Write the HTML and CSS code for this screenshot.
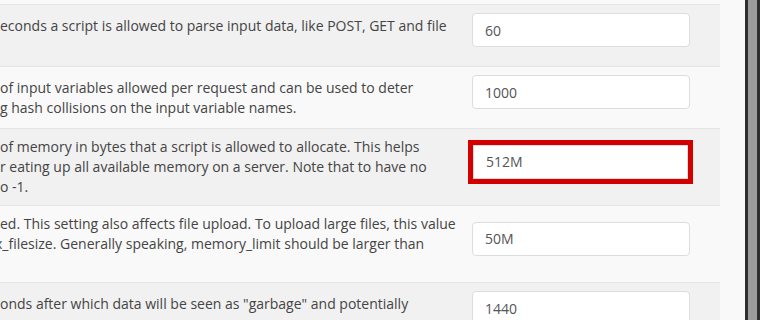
FILE: index.html
```html
<!DOCTYPE html>
<html>

<head lang="en">
    <meta charset="UTF-8">
    <title>PHP Settings</title>
    <link rel="stylesheet" href="styles.css">
</head>

<body>
    <div class="page">
        <div class="settings">
            <!-- max_input_time -->
            <div class="row odd">
                <div class="desc">
                    <div class="line">econds a script is allowed to parse input data, like POST, GET and file</div>
                    <div class="line">&nbsp;</div>
                </div>
                <div class="value"><input type="text" class="field" value="60"></div>
            </div>
            <!-- max_input_vars -->
            <div class="row even">
                <div class="desc">
                    <div class="line">of input variables allowed per request and can be used to deter</div>
                    <div class="line">g hash collisions on the input variable names.</div>
                </div>
                <div class="value"><input type="text" class="field" value="1000"></div>
            </div>
            <!-- memory_limit -->
            <div class="row odd">
                <div class="desc">
                    <div class="line">of memory in bytes that a script is allowed to allocate. This helps</div>
                    <div class="line">r eating up all available memory on a server. Note that to have no</div>
                    <div class="line">o -1.</div>
                </div>
                <div class="value"><input type="text" class="field marked" value="512M"></div>
            </div>
            <!-- post_max_size -->
            <div class="row even">
                <div class="desc">
                    <div class="line">ed. This setting also affects file upload. To upload large files, this value</div>
                    <div class="line cut">x_filesize. Generally speaking, memory_limit should be larger than</div>
                    <div class="line">&nbsp;</div>
                </div>
                <div class="value"><input type="text" class="field" value="50M"></div>
            </div>
            <!-- session.gc_maxlifetime -->
            <div class="row odd">
                <div class="desc">
                    <div class="line">onds after which data will be seen as "garbage" and potentially</div>
                    <div class="line">&nbsp;</div>
                </div>
                <div class="value"><input type="text" class="field" value="1440"></div>
            </div>
        </div>
        <div class="scroll-edge"></div>
    </div>
</body>

</html>
```

FILE: styles.css
```css
/* 页面基础样式 */
body {
    margin: 0px;
    background: #f9f9f9;
    font-family: "Open Sans", "Liberation Sans", sans-serif;
    font-size: 14px;
    color: #444444;
    overflow: hidden;
}

.page {
    display: flex;
    height: 320px;
}

/* 设置列表 */
.settings {
    width: 720px;
    padding-top: 4px;
}

.row {
    display: grid;
    grid-template-columns: 464px 256px;
    align-items: center;
    padding: 8px 0px;
    border-top: 1px solid #e4e4e4;
}

.row.odd {
    background: #f1f1f1;
}

.row.even {
    background: #f9f9f9;
}

.desc {
    overflow: hidden;
    white-space: nowrap;
}

.line {
    line-height: 20px;
}

/* 被左侧裁掉一半的字母 */
.line.cut {
    text-indent: -5px;
}

.value {
    padding-left: 8px;
}

/* 输入框 */
.field {
    display: block;
    box-sizing: border-box;
    width: 218px;
    height: 34px;
    margin: 0px 0px 11px 0px;
    padding: 0px 12px;
    border: 1px solid #dddddd;
    border-radius: 4px;
    background: #ffffff;
    font-family: "Open Sans", "Liberation Sans", sans-serif;
    font-size: 14px;
    color: #555555;
}

/* 红色标注框 */
.field.marked {
    width: 215px;
    margin-left: 1px;
    border-radius: 0px;
    outline: 5px solid #d40000;
}

/* 右侧窗口边缘 */
.scroll-edge {
    margin-left: 25px;
    width: 9px;
    background: #9b9b9b;
    border-left: 3px solid #2e2e2e;
    border-right: 3px solid #2e2e2e;
}
```
